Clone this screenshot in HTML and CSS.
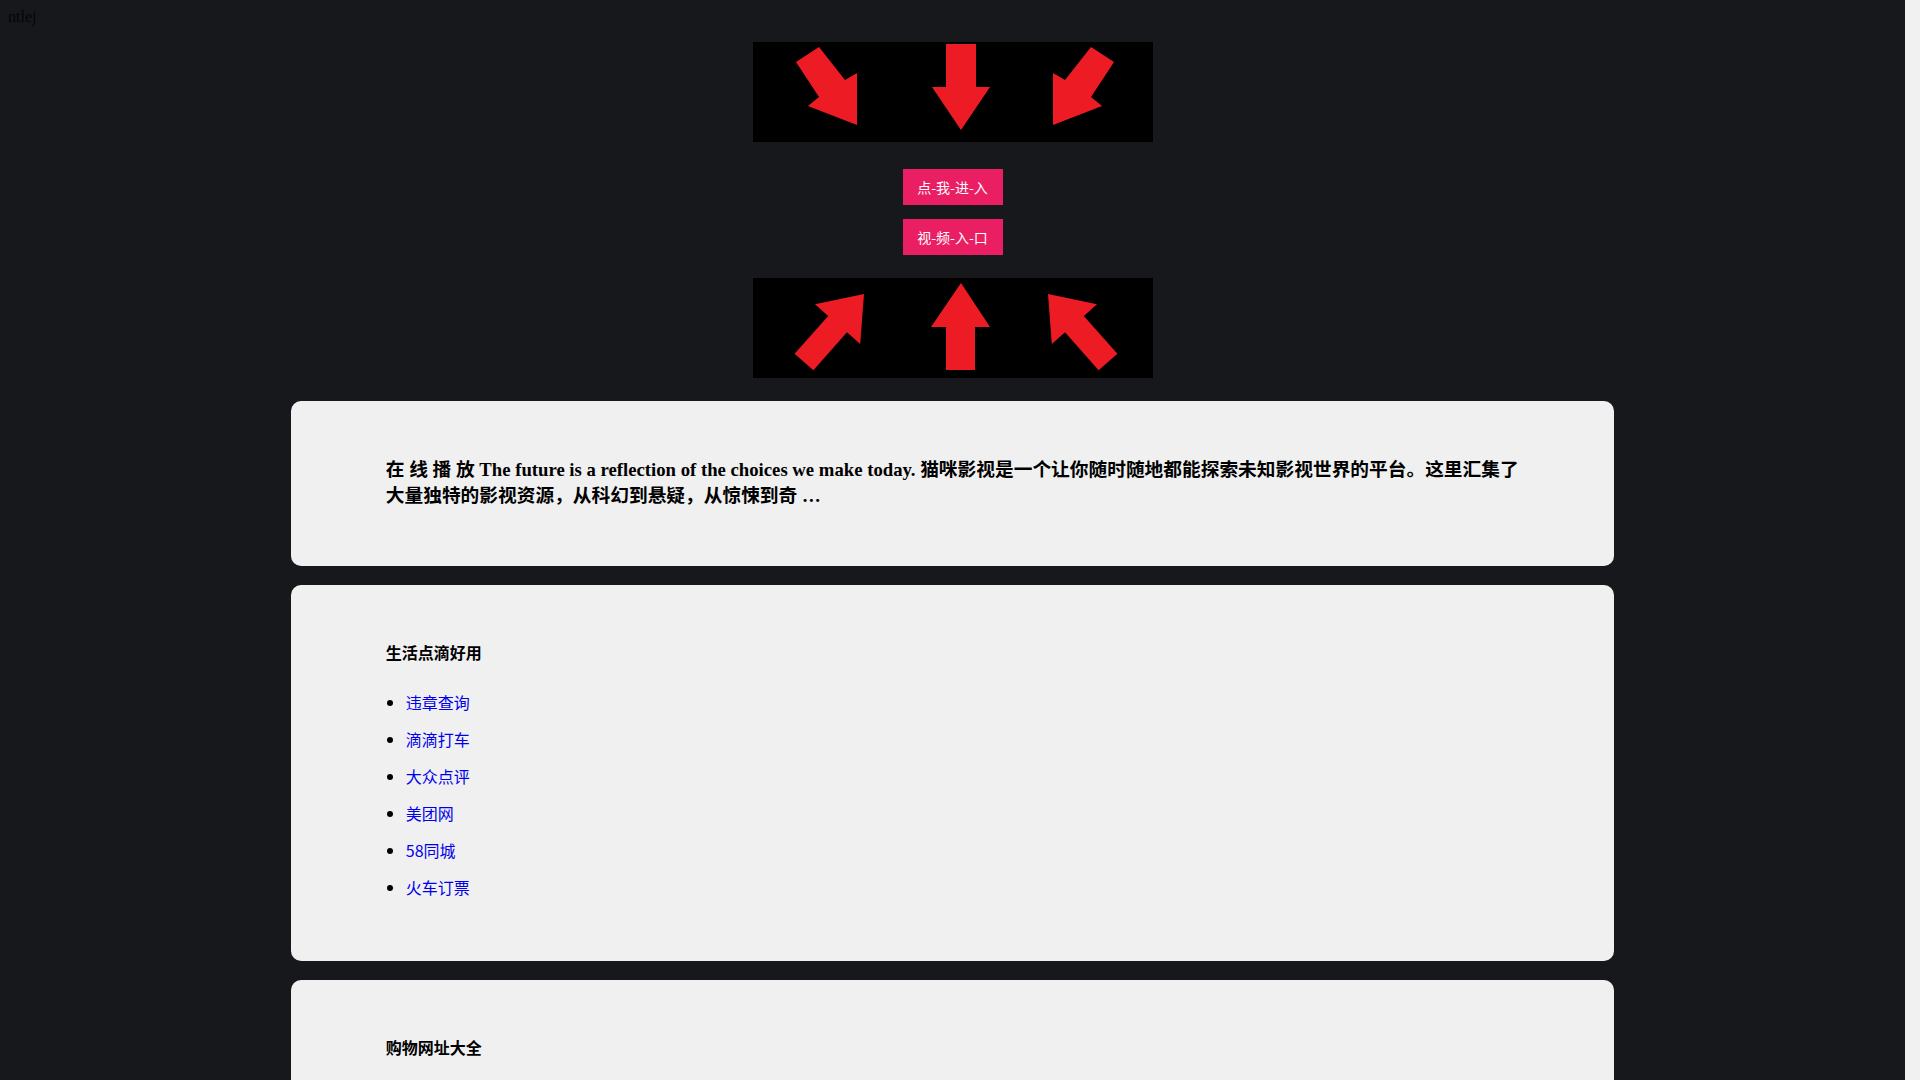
FILE: index.html
```html
<!DOCTYPE html>
<html lang="zh-CN">
<head>
<meta charset="utf-8">
<title>ntlej</title>
<link rel="stylesheet" href="styles.css">
</head>
<body>
<div class="site-name">ntlej</div>
<div class="hero">
  <svg class="arrows" viewBox="0 0 400 100" width="400" height="100">
    <rect width="400" height="100" fill="#000"/>
    <polygon fill="#ed1c24" points="43,20 66,5 92,38 104,31 104,83 55,64 66,55"/>
    <polygon fill="#ed1c24" points="193,2 223,2 223,45 237,45 208,88 179,45 193,45"/>
    <polygon fill="#ed1c24" points="361,20 338,5 312,38 300,31 300,83 349,64 338,55"/>
  </svg>
  <a class="btn" href="#">点-我-进-入</a>
  <a class="btn btn-second" href="#">视-频-入-口</a>
  <svg class="arrows arrows-up" viewBox="0 0 400 100" width="400" height="100">
    <rect width="400" height="100" fill="#000"/>
    <polygon fill="#ed1c24" points="41.6,75.8 75.2,37.9 62,26.3 111,16 107.2,65.9 94,54.3 60.4,92.2"/>
    <polygon fill="#ed1c24" points="208,5 237,49 222,49 222,92 193,92 193,49 178,49"/>
    <polygon fill="#ed1c24" points="364.4,75.8 330.8,37.9 344,26.3 295,16 298.8,65.9 312,54.3 345.6,92.2"/>
  </svg>
</div>
<main class="cards">
  <section class="card intro">
    <h3>在 线 播 放 The future is a reflection of the choices we make today. 猫咪影视是一个让你随时随地都能探索未知影视世界的平台。这里汇集了大量独特的影视资源，从科幻到悬疑，从惊悚到奇 …</h3>
  </section>
  <section class="card">
    <h4>生活点滴好用</h4>
    <ul>
      <li><a href="#">违章查询</a></li>
      <li><a href="#">滴滴打车</a></li>
      <li><a href="#">大众点评</a></li>
      <li><a href="#">美团网</a></li>
      <li><a href="#">58同城</a></li>
      <li><a href="#">火车订票</a></li>
    </ul>
  </section>
  <section class="card">
    <h4>购物网址大全</h4>
    <ul>
      <li><a href="#">淘宝网</a></li>
      <li><a href="#">京东商城</a></li>
      <li><a href="#">天猫</a></li>
      <li><a href="#">拼多多</a></li>
      <li><a href="#">唯品会</a></li>
      <li><a href="#">苏宁易购</a></li>
    </ul>
  </section>
</main>
<div class="scrollbar" aria-hidden="true"></div>
</body>
</html>
```
FILE: styles.css
```css
html {
  background: #17181c;
}
body {
  margin: 8px 23px 8px 8px;
  background: #17181c;
  font-family: "Liberation Serif", "Noto Sans CJK SC", serif;
  font-size: 16px;
  color: #000;
}
.site-name {
  line-height: 18px;
  color: #050505;
}
.hero {
  display: flex;
  flex-direction: column;
  align-items: center;
}
.arrows {
  display: block;
  margin-top: 16px;
}
.arrows-up {
  margin-top: 23px;
}
.btn {
  display: flex;
  align-items: center;
  justify-content: center;
  width: 100px;
  height: 36px;
  margin-top: 27px;
  background: #e91e63;
  color: #fff;
  font-family: "Noto Sans CJK SC", "Noto Sans", sans-serif;
  font-size: 14px;
  text-decoration: none;
}
.btn-second {
  margin-top: 14px;
}
.cards {
  display: block;
  margin-top: 23px;
}
.card {
  box-sizing: content-box;
  width: 60%;
  margin: 0 auto 18.5px;
  padding: 37px 5%;
  background: #f0f0f0;
  border-radius: 10px;
}
.card h3 {
  margin: 18.5px 0 20.5px;
  font-size: 18.72px;
  line-height: 26px;
  font-weight: bold;
  color: #000;
}
.card h4 {
  margin: 19px 0 0;
  font-family: "Noto Sans CJK SC", "Noto Sans", sans-serif;
  font-size: 16px;
  line-height: 22px;
  font-weight: bold;
  color: #000;
}
.card ul {
  margin: 21.5px 0 18px;
  padding-left: 20px;
  font-family: "Noto Sans CJK SC", "Noto Sans", sans-serif;
}
.card li {
  padding: 7px 0;
  line-height: 23px;
}
.card a {
  color: #0000ee;
  text-decoration: none;
}
.scrollbar {
  position: fixed;
  top: 0;
  right: 0;
  width: 15px;
  height: 100vh;
  background: #f1f1f1;
}
```
